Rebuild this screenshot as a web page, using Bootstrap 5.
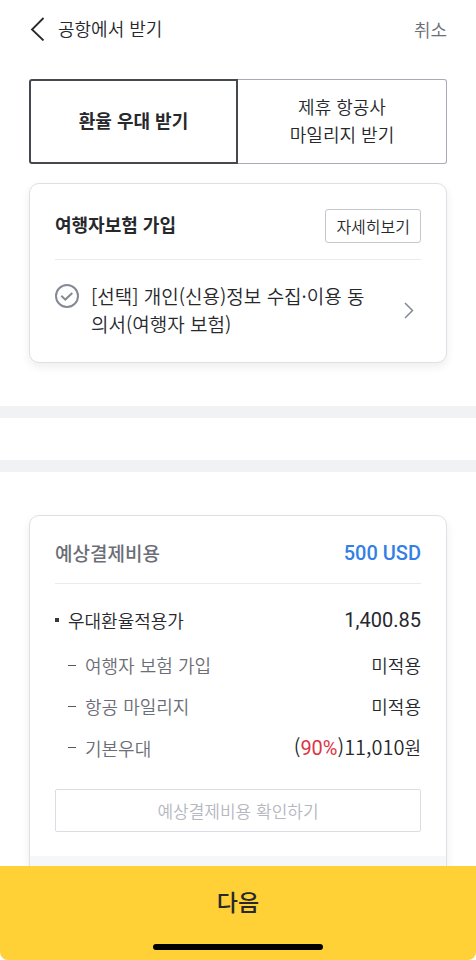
<!DOCTYPE html>
<html lang="ko">
<head>
<meta charset="utf-8">
<meta name="viewport" content="width=device-width, initial-scale=1">
<title>공항에서 받기</title>
<link href="https://cdn.jsdelivr.net/npm/bootstrap@5.3.0/dist/css/bootstrap.min.css" rel="stylesheet">
<style>
  body { font-family: "Noto Sans CJK KR", sans-serif; font-size: 18px; font-weight: 350; line-height: 28px; color: #26282c; background: #fff; word-break: break-all; }
  .btn { --bs-btn-font-size: 18px; --bs-btn-font-weight: 350; --bs-btn-line-height: 28px; --bs-btn-color: #26282c; }
  .gutter { padding-left: 29px; padding-right: 29px; }
  .top-bar { height: 58px; }
  .page-name { font-size: 18px; font-weight: 350; line-height: 28px; padding-bottom: 2px; }
  .cancel { --bs-btn-color: #6b6e76; }
  .choice-wrap { padding-top: 21px; padding-bottom: 43px; }
  .choice { height: 85px; margin-bottom: 19px; }
  .choice .btn { --bs-btn-border-color: #a9aab3; --bs-btn-border-radius: 3px; padding-top: 4px; padding-bottom: 8px; }
  .choice .btn.active { --bs-btn-active-bg: #fff; --bs-btn-active-color: #26282c; --bs-btn-active-border-color: #46484f; border-width: 2px; font-weight: 700; }
  .panel { --bs-card-border-color: #dfe0e6; --bs-card-border-radius: 10px; box-shadow: 0 4px 8px rgba(40, 44, 60, .08); color: inherit; }
  .panel-main { padding: 24px 25px; }
  .terms-panel { padding-top: 25px; }
  .panel-title { font-size: 18px; line-height: 30px; font-weight: 700; }
  .rule { border-top: 1px solid #e9eaed; }
  .terms-row { padding-top: 22px; }
  .terms { font-size: 19px; padding-right: 32px; }
  .btn-detail { --bs-btn-font-size: 16px; --bs-btn-line-height: 24px; --bs-btn-border-color: #c5c7cf; --bs-btn-border-radius: 3px; --bs-btn-padding-x: 10px; --bs-btn-padding-y: 4px; }
  .agree { width: 24px; height: 24px; margin: 2px 12px 0 0; appearance: none; flex: none; background: url("data:image/svg+xml,%3Csvg xmlns='http://www.w3.org/2000/svg' viewBox='0 0 24 24' fill='none' stroke='%23858994' stroke-width='2'%3E%3Ccircle cx='12' cy='12' r='11'/%3E%3Cpath d='M6.300 11.800l4 3.800 7-6.600'/%3E%3C/svg%3E"); }
  .band { height: 12px; background: #f1f2f4; }
  .blank-row { height: 42px; }
  .cost-wrap { padding-top: 43px; }
  .cost-panel { padding-top: 22px; }
  .cost-head { padding-bottom: 15px; }
  .cost-title { font-size: 19px; font-weight: 500; }
  .amount { font-family: Roboto, sans-serif; font-size: 20px; font-weight: 500; color: #337fe5; }
  .rate, .pct { font-family: Roboto, sans-serif; font-size: 20px; font-weight: 400; }
  .pct { color: #dc3545; }
  .figure-text { font-size: 20px; }
  .muted { color: #6b6e76; }
  .costs { gap: 13px; padding-top: 22px; padding-bottom: 27px; }
  .main-row { margin-bottom: 4px; }
  .sub-row { padding-left: 13px; }
  .bullet { width: 4px; height: 4px; background: #36383d; margin-right: 9px; }
  .dash { width: 8px; height: 1px; background: #55585f; margin-right: 9px; }
  .btn-check-cost { --bs-btn-font-size: 17px; --bs-btn-line-height: 29px; --bs-btn-disabled-color: #b5b7c1; --bs-btn-disabled-border-color: #dcdde2; --bs-btn-disabled-opacity: 1; --bs-btn-border-radius: 2px; }
  .panel-foot { height: 60px; background: #f6f7f9; border-radius: 0 0 9px 9px; }
  .next-bar { background: #ffd137; border-radius: 0 0 8px 8px; }
  .btn-next { --bs-btn-font-size: 23px; --bs-btn-font-weight: 500; --bs-btn-line-height: 34px; --bs-btn-padding-y: 18px; --bs-btn-border-radius: 0; }
  .home-line { width: 170px; height: 6px; border-radius: 3px; background: #000; margin: 8px auto 10px; }
</style>
<script src="https://cdn.jsdelivr.net/npm/bootstrap@5.3.0/dist/js/bootstrap.bundle.min.js"></script>
</head>
<body>
<header class="top-bar gutter d-flex align-items-center justify-content-between">
  <div class="d-flex align-items-center">
    <button class="btn p-0 border-0 d-flex" type="button" aria-label="뒤로">
      <svg width="29" height="24" viewBox="0 0 29 24" fill="none" stroke="#26282c" stroke-width="1.800"><path d="M14.500 1L3 12.500L14.500 23.500"/></svg>
    </button>
    <h1 class="page-name m-0">공항에서 받기</h1>
  </div>
  <button class="btn p-0 border-0 cancel" type="button">취소</button>
</header>
<main>
  <section class="gutter choice-wrap">
    <div class="choice d-flex" role="group" aria-label="혜택 선택">
      <button class="btn active w-50 rounded-end-0" type="button" aria-pressed="true">환율 우대 받기</button>
      <button class="btn w-50 rounded-start-0 border-start-0" type="button" aria-pressed="false">제휴 항공사<br>마일리지 받기</button>
    </div>
    <article class="card panel">
      <div class="panel-main terms-panel">
        <div class="d-flex justify-content-between align-items-start pb-3">
          <h2 class="panel-title m-0">여행자보험 가입</h2>
          <button class="btn btn-detail" type="button">자세히보기</button>
        </div>
        <div class="rule terms-row d-flex align-items-center">
          <label class="d-flex align-items-start flex-grow-1" for="agree">
            <input class="agree" type="checkbox" id="agree">
            <span class="terms">[선택] 개인(신용)정보 수집·이용 동의서(여행자 보험)</span>
          </label>
          <button class="btn p-0 border-0 d-flex" type="button" aria-label="동의서 보기">
            <svg width="24" height="18" viewBox="0 0 24 18" fill="none" stroke="#858994" stroke-width="1.500"><path d="M8 2L15.500 9.500L8 17"/></svg>
          </button>
        </div>
      </div>
    </article>
  </section>
  <div class="band"></div>
  <div class="blank-row"></div>
  <div class="band"></div>
  <section class="gutter cost-wrap">
    <article class="card panel">
      <div class="panel-main cost-panel">
        <div class="d-flex justify-content-between align-items-center cost-head">
          <h2 class="panel-title cost-title muted m-0">예상결제비용</h2>
          <span class="amount">500 USD</span>
        </div>
        <div class="rule d-flex flex-column costs">
          <div class="d-flex align-items-center main-row"><span class="bullet"></span><span>우대환율적용가</span><span class="rate ms-auto">1,400.85</span></div>
          <div class="d-flex align-items-center sub-row"><span class="dash"></span><span class="muted">여행자 보험 가입</span><span class="ms-auto">미적용</span></div>
          <div class="d-flex align-items-center sub-row"><span class="dash"></span><span class="muted">항공 마일리지</span><span class="ms-auto">미적용</span></div>
          <div class="d-flex align-items-center sub-row"><span class="dash"></span><span class="muted">기본우대</span><span class="ms-auto"><span class="figure-text">(<span class="pct">90%</span>)11,010</span>원</span></div>
        </div>
        <button class="btn btn-check-cost w-100" type="button" disabled>예상결제비용 확인하기</button>
      </div>
      <div class="panel-foot"></div>
    </article>
  </section>
</main>
<footer class="next-bar fixed-bottom">
  <button class="btn btn-next w-100 border-0" type="button">다음</button>
  <div class="home-line"></div>
</footer>
</body>
</html>
